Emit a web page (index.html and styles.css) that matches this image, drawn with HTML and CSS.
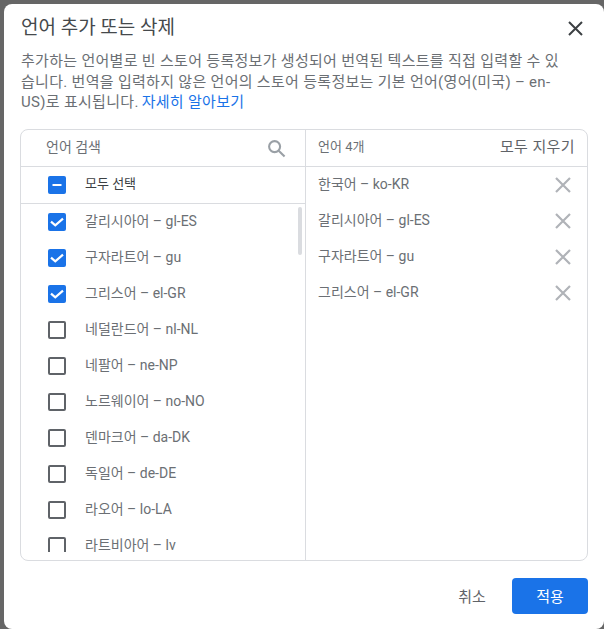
FILE: index.html
```html
<!DOCTYPE html>
<html lang="ko">
<head>
<meta charset="utf-8">
<title>언어 추가 또는 삭제</title>
<link rel="stylesheet" href="styles.css">
</head>
<body>
<div class="dialog">
  <header class="head">
    <h1>언어 추가 또는 삭제</h1>
    <svg class="close" viewBox="0 0 16 16"><path d="M2 2 15 15M15 2 2 15"/></svg>
  </header>
  <p class="intro">추가하는 언어별로 빈 스토어 등록정보가 생성되어 번역된 텍스트를 직접 입력할 수 있습니다. 번역을 입력하지 않은 언어의 스토어 등록정보는 기본 언어(영어(미국) – en-US)로 표시됩니다. <a href="#">자세히 알아보기</a></p>
  <section class="panel">
    <div class="left">
      <div class="search">
        <span class="label">언어 검색</span>
        <svg viewBox="0 0 20 20"><circle cx="8" cy="8" r="5.8"/><path d="M12.3 12.3 18.5 18.5"/></svg>
      </div>
      <div class="row all">
        <span class="box on"><svg viewBox="0 0 18 18"><path d="M4.5 9h9"/></svg></span>
        <span class="label select-all">모두 선택</span>
      </div>
      <div class="list">
        <div class="thumb"></div>
        <div class="row"><span class="box on"><svg viewBox="0 0 18 18"><path d="M3 8.6 7.3 12.4 15 5.6"/></svg></span><span class="label">갈리시아어 – gl-ES</span></div>
        <div class="row"><span class="box on"><svg viewBox="0 0 18 18"><path d="M3 8.6 7.3 12.4 15 5.6"/></svg></span><span class="label">구자라트어 – gu</span></div>
        <div class="row"><span class="box on"><svg viewBox="0 0 18 18"><path d="M3 8.6 7.3 12.4 15 5.6"/></svg></span><span class="label">그리스어 – el-GR</span></div>
        <div class="row"><span class="box"></span><span class="label">네덜란드어 – nl-NL</span></div>
        <div class="row"><span class="box"></span><span class="label">네팔어 – ne-NP</span></div>
        <div class="row"><span class="box"></span><span class="label">노르웨이어 – no-NO</span></div>
        <div class="row"><span class="box"></span><span class="label">덴마크어 – da-DK</span></div>
        <div class="row"><span class="box"></span><span class="label">독일어 – de-DE</span></div>
        <div class="row"><span class="box"></span><span class="label">라오어 – lo-LA</span></div>
        <div class="row"><span class="box"></span><span class="label">라트비아어 – lv</span></div>
      </div>
    </div>
    <div class="right">
      <div class="count"><span class="label">언어 4개</span><span class="label clear">모두 지우기</span></div>
      <div class="chosen">
        <div class="item"><span class="label">한국어 – ko-KR</span><svg viewBox="0 0 16 16"><path d="M1 1 15 15M15 1 1 15"/></svg></div>
        <div class="item"><span class="label">갈리시아어 – gl-ES</span><svg viewBox="0 0 16 16"><path d="M1 1 15 15M15 1 1 15"/></svg></div>
        <div class="item"><span class="label">구자라트어 – gu</span><svg viewBox="0 0 16 16"><path d="M1 1 15 15M15 1 1 15"/></svg></div>
        <div class="item"><span class="label">그리스어 – el-GR</span><svg viewBox="0 0 16 16"><path d="M1 1 15 15M15 1 1 15"/></svg></div>
      </div>
    </div>
  </section>
  <footer class="foot">
    <button class="cancel">취소</button>
    <button class="apply">적용</button>
  </footer>
</div>
</body>
</html>
```
FILE: styles.css
```css
* { box-sizing: border-box; }
html, body { margin: 0; height: 100%; }
body {
  background: #666;
  overflow: hidden;
  padding: 4px 0 0 4px;
  font-family: Roboto, "Noto Sans CJK KR", sans-serif;
  color: #6b6f74;
}
.dialog {
  width: 600px;
  height: 625px;
  background: #fff;
  border-radius: 8px;
  padding: 0 16px;
  display: flex;
  flex-direction: column;
}
.head {
  height: 47px;
  display: flex;
  align-items: center;
  justify-content: space-between;
  padding: 0 5px 0 1px;
}
h1 {
  margin: 0 0 4px;
  font-size: 19px;
  font-weight: 400;
  color: #45494c;
}
.close { width: 16px; height: 16px; fill: none; stroke: #3c4043; stroke-width: 2; }
.intro {
  margin: 0;
  padding-left: 1px;
  width: 541px;
  height: 78px;
  font-size: 15px;
  letter-spacing: 0.3px;
  line-height: 20.5px;
}
.intro a { color: #1a73e8; text-decoration: none; margin-left: -1px; }
.panel {
  width: 568px;
  height: 432px;
  border: 1px solid #dadce0;
  border-radius: 8px;
  display: flex;
  overflow: hidden;
  font-size: 14px;
}
.label { padding-bottom: 5px; }
.left {
  width: 285px;
  border-right: 1px solid #dadce0;
  padding-bottom: 8px;
  display: flex;
  flex-direction: column;
}
.search {
  height: 37px;
  flex: none;
  border-bottom: 1px solid #dadce0;
  display: flex;
  align-items: center;
  justify-content: space-between;
  padding: 0 19px 0 25px;
}
.search svg { width: 19px; height: 19px; fill: none; stroke: #9aa0a6; stroke-width: 2.2; }
.row {
  height: 36px;
  flex: none;
  display: flex;
  align-items: center;
  gap: 19px;
  padding-left: 27px;
}
.all { height: 37px; border-bottom: 1px solid #dadce0; }
.select-all { color: #3c4043; font-size: 13px; }
.box {
  width: 18px;
  height: 18px;
  flex: none;
  border: 2px solid #5f6368;
  border-radius: 2px;
  display: block;
}
.box.on { border: 0; background: #1a73e8; }
.box svg { display: block; width: 18px; height: 18px; fill: none; stroke: #fff; stroke-width: 2.2; }
.list { position: relative; flex: 1; overflow: hidden; }
.thumb {
  position: absolute;
  right: 3px;
  top: 3px;
  width: 4px;
  height: 48px;
  border-radius: 2px;
  background: #dadce0;
}
.right { flex: 1; display: flex; flex-direction: column; }
.count {
  height: 37px;
  flex: none;
  border-bottom: 1px solid #dadce0;
  display: flex;
  align-items: center;
  justify-content: space-between;
  padding: 0 12px 0 12px;
  font-size: 13px;
}
.clear { font-size: 15px; letter-spacing: 0.4px; color: #5f6368; }
.chosen { flex: 1; }
.item {
  height: 36px;
  display: flex;
  align-items: center;
  justify-content: space-between;
  padding: 0 16px 0 12px;
}
.item svg { width: 16px; height: 16px; fill: none; stroke: #b0b3b8; stroke-width: 2.2; }
.foot {
  flex: 1;
  display: flex;
  justify-content: flex-end;
  align-items: flex-start;
  gap: 17px;
  padding-top: 17px;
}
button { font-family: inherit; font-size: 15px; border: 0; border-radius: 4px; height: 36px; padding: 0 0 2px; }
.cancel { background: none; color: #5f6368; width: 46px; }
.apply { background: #1a73e8; color: #fff; width: 76px; }
```
